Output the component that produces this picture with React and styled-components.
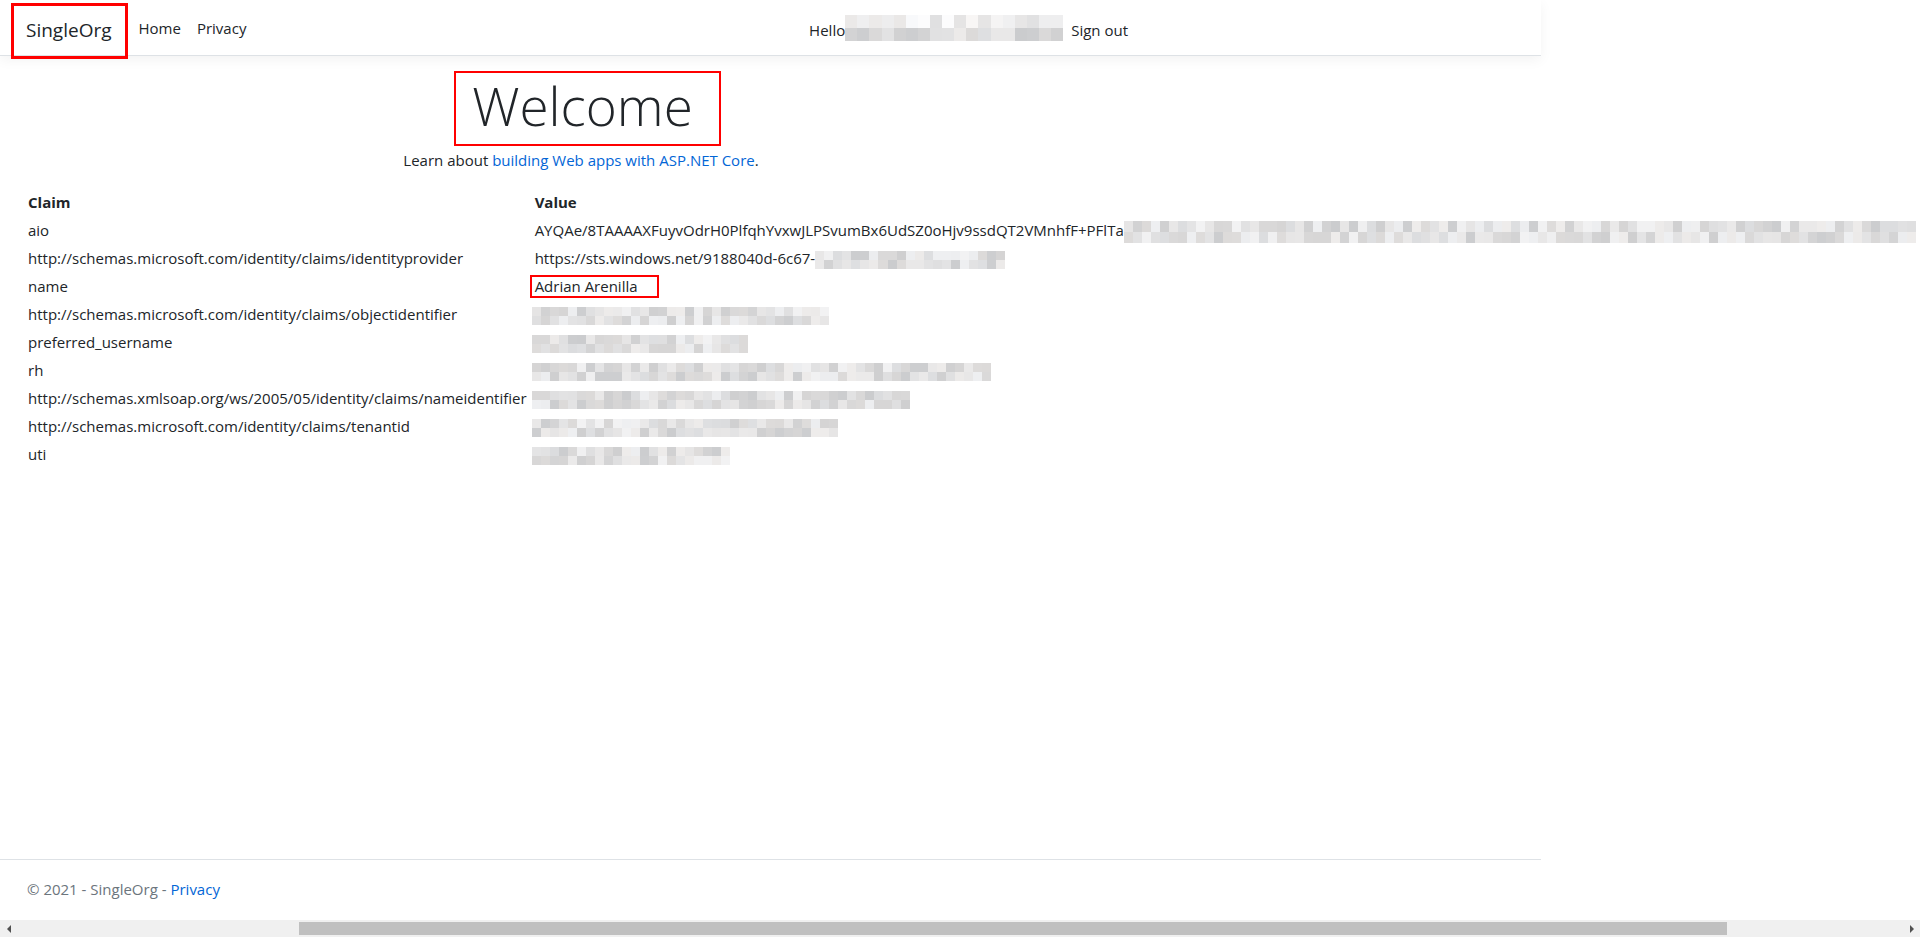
import React from "react";
import styled, { createGlobalStyle } from "styled-components";

const GlobalStyle = createGlobalStyle`
  html, body {
    margin: 0;
    padding: 0;
    background: #fff;
    overflow: hidden;
  }
  body {
    font-family: "Open Sans", "Liberation Sans", sans-serif;
    font-size: 15px;
    line-height: 1.5;
    color: #212529;
  }
  a {
    color: #0366d6;
    text-decoration: none;
  }
`;

const Viewport = styled.div`
  width: 1920px;
  height: 937px;
  display: flex;
  flex-direction: column;
  overflow: hidden;
`;

const Page = styled.div`
  width: 1541px;
  flex: 1;
  min-height: 0;
  display: flex;
  flex-direction: column;
`;

const NavBar = styled.header`
  height: 56px;
  box-sizing: border-box;
  border-bottom: 1px solid #dee2e6;
  box-shadow: 0 4px 12px rgba(0, 0, 0, 0.05);
  background: #fff;
  position: relative;
  z-index: 1;
  display: flex;
  align-items: center;
`;

const NavInner = styled.div`
  width: 1140px;
  margin-left: 11px;
  padding-right: 15px;
  box-sizing: border-box;
  height: 100%;
  display: flex;
  align-items: center;
`;

const Mark = styled.div`
  border: ${p => p.$thick || 2}px solid #ff0000;
  box-sizing: border-box;
`;

const BrandBox = styled(Mark)`
  height: 56px;
  margin-top: 6px;
  padding: 0 13px 0 12px;
  display: flex;
  align-items: center;
`;

const Brand = styled.a`
  font-size: 19px;
  color: #212529;
`;

const NavLink = styled.a`
  padding: 0 8px;
  color: #212529;
  font-size: 15px;
  margin-top: ${p => p.$low ? "6px" : "2px"};
  margin-left: ${p => p.$first ? "3px" : "0"};
`;

const Login = styled.div`
  margin-left: auto;
  display: flex;
  align-items: center;
`;

const Hello = styled.span`
  padding-left: 8px;
  margin-top: 6px;
`;

const Main = styled.main`
  flex: 1;
  min-height: 0;
`;

const Container = styled.div`
  width: 1140px;
  margin-left: 11px;
  padding: 0 16px;
  box-sizing: border-box;
`;

const Intro = styled.div`
  display: flex;
  flex-direction: column;
  align-items: center;
  text-align: center;
`;

const TitleBox = styled(Mark)`
  margin: 15px 0 0 13px;
  padding: 1px 26px 6px 16px;
`;

const Title = styled.h1`
  margin: 0;
  font-size: 53px;
  font-weight: 300;
  line-height: 1.2;
  color: #212529;
`;

const Lead = styled.p`
  margin: 2px 0 17px;
  line-height: 24px;
`;

const ClaimTable = styled.table`
  border-collapse: collapse;
  white-space: nowrap;
`;

const Cell = styled.td`
  height: 28px;
  padding: 0 7px 0 1px;
  text-align: left;
  vertical-align: middle;
  font-weight: ${p => p.$head ? 700 : 400};
`;

const NameBox = styled(Mark)`
  display: inline-block;
  margin-left: -5px;
  padding: 0 19px 0 3px;
  line-height: 19px;
`;

const Blur = styled.span`
  display: inline-grid;
  vertical-align: middle;
  grid-auto-rows: ${p => p.$cellH}px;
  margin-left: ${p => p.$shift || 0}px;
`;

const Footer = styled.footer`
  height: 61px;
  box-sizing: border-box;
  border-top: 1px solid #dee2e6;
  line-height: 59px;
  color: #6c757d;
  font-size: 15px;
`;

const ScrollBar = styled.div`
  height: 17px;
  background: #f0f0f0;
  display: flex;
  align-items: center;
`;

const Arrow = styled.span`
  width: 17px;
  height: 17px;
  display: flex;
  align-items: center;
  justify-content: center;
  &::before {
    content: "";
    border-top: 4px solid transparent;
    border-bottom: 4px solid transparent;
    ${p => p.$right ? "border-left: 4px solid #505050;" : "border-right: 4px solid #505050;"}
  }
`;

const Thumb = styled.span`
  height: 13px;
  width: 1428px;
  margin-left: 282px;
  margin-right: auto;
  background: #c0c0c0;
`;

const shade = (seed, i, light) => {
  const x = Math.sin(seed * 91.7 + i * 12.9898) * 43758.5453;
  const f = x - Math.floor(x);
  const base = light ? 0xdc : 0xcc;
  const v = Math.round(base + f * (light ? 0x20 : 0x26));
  const t = Math.round((f * 7) % 3) - 1;
  return `rgb(${v + t}, ${v}, ${v - t + 1})`;
};

const Redacted = ({ width, rows = 2, cellW = 9, cellH = 9, seed = 1, shift, lightTop }) => {
  const cols = Math.max(1, Math.round(width / cellW));
  const w = width / cols;
  const cells = [];
  for (let r = 0; r < rows; r++) {
    for (let c = 0; c < cols; c++) {
      cells.push(
        <span key={r + "-" + c} style={{ background: shade(seed, r * 131 + c, lightTop && r === 0) }} />
      );
    }
  }
  return (
    <Blur $cellH={cellH} $shift={shift} style={{ gridTemplateColumns: `repeat(${cols}, ${w}px)` }}>
      {cells}
    </Blur>
  );
};

const claims = [
  { claim: "aio", value: "AYQAe/8TAAAAXFuyvOdrH0PlfqhYvxwJLPSvumBx6UdSZ0oHjv9ssdQT2VMnhfF+PFlTa", blur: 792, cellH: 11 },
  { claim: "http://schemas.microsoft.com/identity/claims/identityprovider", value: "https://sts.windows.net/9188040d-6c67-", blur: 190 },
  { claim: "name", value: "Adrian Arenilla", marked: true },
  { claim: "http://schemas.microsoft.com/identity/claims/objectidentifier", blur: 297 },
  { claim: "preferred_username", blur: 217 },
  { claim: "rh", blur: 460 },
  { claim: "http://schemas.xmlsoap.org/ws/2005/05/identity/claims/nameidentifier", blur: 379 },
  { claim: "http://schemas.microsoft.com/identity/claims/tenantid", blur: 307 },
  { claim: "uti", blur: 199 },
];

const ClaimValue = ({ row, index }) => {
  if (row.marked) return <NameBox>{row.value}</NameBox>;
  if (!row.value) return <Redacted width={row.blur} seed={index + 3} shift={-3} />;
  return (
    <>
      {row.value}
      <Redacted width={row.blur} seed={index + 3} cellH={row.cellH || 9} />
    </>
  );
};

export default function App() {
  return (
    <Viewport>
      <GlobalStyle />
      <Page>
        <NavBar>
          <NavInner>
            <BrandBox $thick={3}>
              <Brand href="#">SingleOrg</Brand>
            </BrandBox>
            <NavLink href="#" $first>Home</NavLink>
            <NavLink href="#">Privacy</NavLink>
            <Login>
              <Hello>Hello</Hello>
              <Redacted width={218} cellW={12} cellH={13} seed={42} lightTop />
              <NavLink href="#" $low>Sign out</NavLink>
            </Login>
          </NavInner>
        </NavBar>
        <Main>
          <Container>
            <Intro>
              <TitleBox>
                <Title>Welcome</Title>
              </TitleBox>
              <Lead>
                Learn about <a href="#">building Web apps with ASP.NET Core</a>.
              </Lead>
            </Intro>
            <ClaimTable>
              <thead>
                <tr>
                  <Cell as="th" $head>Claim</Cell>
                  <Cell as="th" $head>Value</Cell>
                </tr>
              </thead>
              <tbody>
                {claims.map((row, i) => (
                  <tr key={row.claim}>
                    <Cell>{row.claim}</Cell>
                    <Cell>
                      <ClaimValue row={row} index={i} />
                    </Cell>
                  </tr>
                ))}
              </tbody>
            </ClaimTable>
          </Container>
        </Main>
        <Footer>
          <Container>
            &copy; 2021 - SingleOrg - <a href="#">Privacy</a>
          </Container>
        </Footer>
      </Page>
      <ScrollBar>
        <Arrow />
        <Thumb />
        <Arrow $right />
      </ScrollBar>
    </Viewport>
  );
}
